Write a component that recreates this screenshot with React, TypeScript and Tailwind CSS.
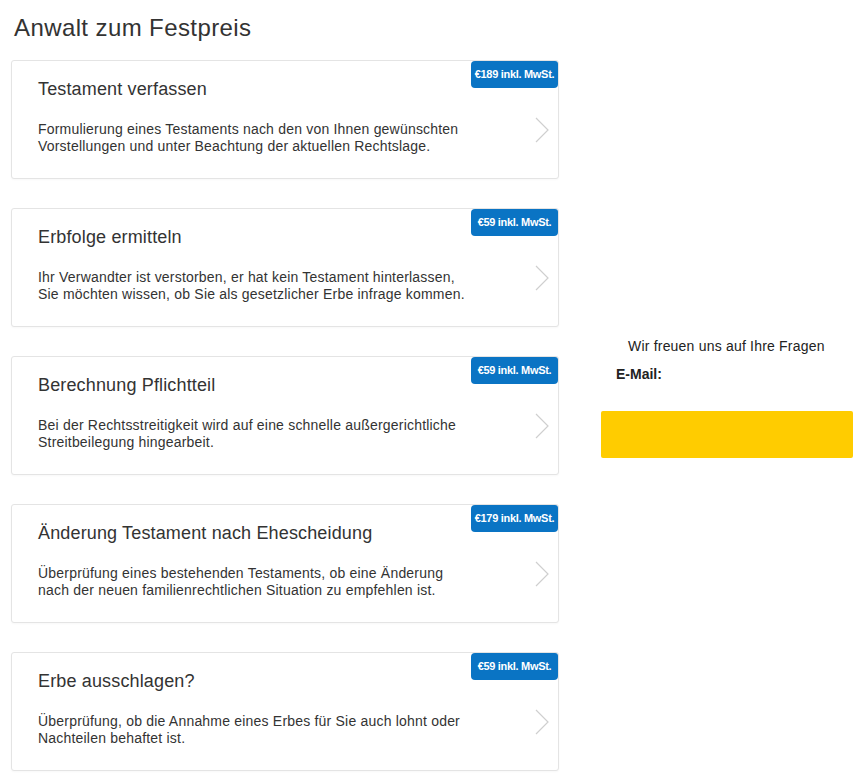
const services = [
  {
    title: "Testament verfassen",
    price: "€189 inkl. MwSt.",
    text: ["Formulierung eines Testaments nach den von Ihnen gewünschten", "Vorstellungen und unter Beachtung der aktuellen Rechtslage."],
  },
  {
    title: "Erbfolge ermitteln",
    price: "€59 inkl. MwSt.",
    text: ["Ihr Verwandter ist verstorben, er hat kein Testament hinterlassen,", "Sie möchten wissen, ob Sie als gesetzlicher Erbe infrage kommen."],
  },
  {
    title: "Berechnung Pflichtteil",
    price: "€59 inkl. MwSt.",
    text: ["Bei der Rechtsstreitigkeit wird auf eine schnelle außergerichtliche", "Streitbeilegung hingearbeit."],
  },
  {
    title: "Änderung Testament nach Ehescheidung",
    price: "€179 inkl. MwSt.",
    text: ["Überprüfung eines bestehenden Testaments, ob eine Änderung", "nach der neuen familienrechtlichen Situation zu empfehlen ist."],
  },
  {
    title: "Erbe ausschlagen?",
    price: "€59 inkl. MwSt.",
    text: ["Überprüfung, ob die Annahme eines Erbes für Sie auch lohnt oder", "Nachteilen behaftet ist."],
  },
];

function Chevron() {
  return (
    <svg width="14" height="26" viewBox="0 0 14 26" fill="none" className="shrink-0">
      <path d="M1 1 L13 13 L1 25" stroke="#cfcfcf" strokeWidth="1.2" />
    </svg>
  );
}

export default function App() {
  return (
    <div className="w-[868px] h-[784px] bg-white overflow-hidden font-['Liberation_Sans',Arial,sans-serif] flex">
      <div className="w-[559px] pl-[11px] shrink-0">
        <h1 className="text-[24px] leading-[28px] tracking-[0.4px] text-[#333] pt-[14px] pl-[3px] h-[60px]">
          Anwalt zum Festpreis
        </h1>
        <div className="flex flex-col gap-[29px]">
          {services.map((s, i) => (
            <div
              key={i}
              className="relative h-[119px] border border-[#e4e4e4] rounded-[3px] bg-white shadow-[0_1px_2px_rgba(0,0,0,0.03)] flex items-start pl-[26px] pr-[9px]"
            >
              <div className="absolute top-0 right-0 h-[27px] w-[87px] bg-[#0a74c4] rounded-[4px] rounded-tr-[3px] flex items-center justify-center whitespace-nowrap text-white text-[11px] tracking-[-0.3px] font-bold">
                {s.price}
              </div>
              <div className="flex-1 pt-[17px]">
                <div className="text-[18px] leading-[22px] tracking-[0.15px] text-[#333] mb-[21px]">{s.title}</div>
                <div className="text-[14px] leading-[17px] tracking-[0.2px] text-[#333]">
                  {s.text.map((t, j) => (
                    <div key={j}>{t}</div>
                  ))}
                </div>
              </div>
              <div className="mt-[56px]">
                <Chevron />
              </div>
            </div>
          ))}
        </div>
      </div>
      <div className="flex-1 flex flex-col pt-[338px] pl-[42px]">
        <div className="text-[14px] leading-[17px] tracking-[0.2px] text-[#222] pl-[27px]">Wir freuen uns auf Ihre Fragen</div>
        <div className="text-[14px] leading-[17px] font-bold text-[#222] pl-[15px] mt-[11px]">E-Mail:</div>
        <div className="mt-[28px] h-[47px] w-[252px] bg-[#ffcc00] rounded-[2px]" />
      </div>
    </div>
  );
}
